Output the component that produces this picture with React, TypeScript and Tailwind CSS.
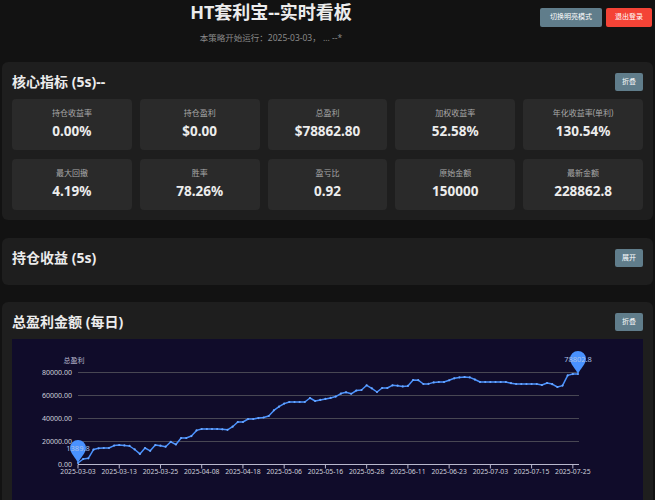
import React from "react";

const keyPts: [number, number][] = [
  [78, 462], [83, 458], [88, 458], [92, 449], [100, 447], [110, 447], [115, 444], [120, 444],
  [130, 445], [133, 447], [140, 453], [145, 447], [150, 450], [155, 444], [163, 445], [167, 446],
  [170, 440], [175, 445], [180, 437], [190, 437], [195, 430], [200, 428], [220, 428], [227, 429],
  [232, 427], [235, 421], [243, 421], [247, 418], [257, 418], [260, 416], [267, 417], [273, 410],
  [280, 405], [287, 401], [297, 401], [305, 401], [310, 397], [315, 400], [320, 399], [325, 398],
  [335, 396], [340, 393], [345, 391], [352, 393], [357, 389], [362, 389], [367, 384], [377, 391],
  [382, 387], [388, 387], [393, 384], [407, 386], [413, 379], [417, 378], [422, 383], [428, 383],
  [435, 381], [445, 381], [455, 377], [462, 376], [468, 376], [473, 377], [478, 381], [485, 381],
  [508, 381], [513, 383], [525, 383], [538, 383], [542, 384], [547, 382], [552, 383], [557, 386],
  [562, 386], [565, 378], [568, 374], [573, 373], [578, 373],
];

function interp(x: number): number {
  for (let i = 0; i < keyPts.length - 1; i++) {
    const [x0, y0] = keyPts[i];
    const [x1, y1] = keyPts[i + 1];
    if (x >= x0 && x <= x1) {
      return y0 + ((y1 - y0) * (x - x0)) / (x1 - x0);
    }
  }
  return keyPts[keyPts.length - 1][1];
}

const N = 98;
const samples: [number, number][] = Array.from({ length: N }, (_, i) => {
  const x = 78 + (i * 500) / (N - 1);
  return [x, interp(x)];
});

const dates = [
  "2025-03-03", "2025-03-13", "2025-03-25", "2025-04-08", "2025-04-18", "2025-05-06",
  "2025-05-16", "2025-05-28", "2025-06-11", "2025-06-23", "2025-07-03", "2025-07-15", "2025-07-25",
];

const yTicks = [
  { y: 371.5, t: "80000.00" },
  { y: 394.5, t: "60000.00" },
  { y: 417.5, t: "40000.00" },
  { y: 440.5, t: "20000.00" },
  { y: 463.5, t: "0.00" },
];

function Pin({ cx, cy, label }: { cx: number; cy: number; label: string }) {
  const r = 8;
  const tip = cy + 15;
  const d = `M ${cx} ${tip} C ${cx - 2} ${tip - 5}, ${cx - r} ${cy + 5}, ${cx - r} ${cy} A ${r} ${r} 0 1 1 ${cx + r} ${cy} C ${cx + r} ${cy + 5}, ${cx + 2} ${tip - 5}, ${cx} ${tip} Z`;
  return (
    <g>
      <path d={d} fill="#4992ff" />
      <text
        x={cx}
        y={cy + 2.5}
        textAnchor="middle"
        fontSize="7.5"
        fill="#a9c0e8"
        fontFamily="'Noto Sans', 'Noto Sans CJK SC', sans-serif"
      >
        {label}
      </text>
    </g>
  );
}

function Chart() {
  const linePath = samples.map(([x, y], i) => `${i === 0 ? "M" : "L"}${x.toFixed(1)} ${y.toFixed(1)}`).join(" ");
  return (
    <div className="h-[170px] bg-[#100c2a]">
      <svg width="630" height="170" viewBox="12 338 630 170">
        <text x="74" y="362" textAnchor="middle" fontSize="7" fill="#b9b8ce" fontFamily="'Noto Sans CJK SC', sans-serif">
          总盈利
        </text>
        {yTicks.map((t) =>
          t.t !== "0.00" ? <line key={t.t} x1="78" x2="579" y1={t.y} y2={t.y} stroke="#484753" strokeWidth="1" /> : null
        )}
        {yTicks.map((t) => (
          <text key={"l" + t.t} x="72" y={t.y + 2.5} textAnchor="end" fontSize="7" fill="#cfcfdc" fontFamily="'Noto Sans', sans-serif">
            {t.t}
          </text>
        ))}
        <line x1="78" x2="579" y1="463.5" y2="463.5" stroke="#b9b8ce" strokeWidth="1" />
        {dates.map((d, i) => {
          const x = 78 + (i * 500 * 8) / (N - 1);
          return (
            <g key={d}>
              <line x1={x} x2={x} y1="463.5" y2="467.5" stroke="#b9b8ce" strokeWidth="1" />
              <text x={x} y="472.5" textAnchor="middle" fontSize="6.8" fill="#cfcfdc" fontFamily="'Noto Sans', sans-serif">
                {d}
              </text>
            </g>
          );
        })}
        <path d={linePath} fill="none" stroke="#4992ff" strokeWidth="1.5" strokeLinejoin="round" />
        {samples.map(([x, y], i) => (
          <circle key={i} cx={x} cy={y} r="1.1" fill="#6aa6ff" />
        ))}
        <Pin cx={78} cy={447} label="1389.8" />
        <Pin cx={578} cy={358} label="78802.8" />
      </svg>
    </div>
  );
}

const metrics = [
  { label: "持仓收益率", value: "0.00%" },
  { label: "持仓盈利", value: "$0.00" },
  { label: "总盈利", value: "$78862.80" },
  { label: "加权收益率", value: "52.58%" },
  { label: "年化收益率(单利)", value: "130.54%" },
  { label: "最大回撤", value: "4.19%" },
  { label: "胜率", value: "78.26%" },
  { label: "盈亏比", value: "0.92" },
  { label: "原始金额", value: "150000" },
  { label: "最新金额", value: "228862.8" },
];

function SmallBtn({ children }: { children: React.ReactNode }) {
  return (
    <button className="h-[18px] px-[7px] rounded-[2px] bg-[#607d8b] text-[7px] leading-[18px] text-white">
      {children}
    </button>
  );
}

function SectionHeader({ title, btn }: { title: string; btn: string }) {
  return (
    <div className="flex h-[20px] items-center justify-between">
      <h2 className="text-[14px] font-bold leading-[20px] text-[#ececec]">{title}</h2>
      <SmallBtn>{btn}</SmallBtn>
    </div>
  );
}

export default function App() {
  return (
    <div
      className="h-[500px] overflow-hidden bg-[#121212] px-[2px] text-white"
      style={{ fontFamily: "'Noto Sans', 'Noto Sans CJK SC', sans-serif" }}
    >
      <header className="flex items-start">
        <div className="flex-1 pt-px text-center">
          <h1 className="text-[18px] font-bold leading-[22px] text-[#ececec]">HT套利宝--实时看板</h1>
          <p className="mt-[9px] text-[8.5px] leading-[12px] text-[#8a8a8a]">本策略开始运行：2025-03-03， ... --*</p>
        </div>
        <div className="flex gap-[4px] pt-[8px] pr-px">
          <button className="h-[19px] w-[62px] rounded-[2px] bg-[#607d8b] text-[7px] text-white">切换明亮模式</button>
          <button className="h-[19px] w-[46px] rounded-[2px] bg-[#f44336] text-[7px] text-white">退出登录</button>
        </div>
      </header>

      <section className="mt-[18px] rounded-[6px] bg-[#1e1e1e] p-[10px]">
        <SectionHeader title="核心指标 (5s)--" btn="折叠" />
        <div className="mt-[7px] grid grid-cols-5 gap-x-[8px] gap-y-[9px]">
          {metrics.map((m) => (
            <div key={m.label} className="h-[51px] rounded-[4px] bg-[#2a2a2a] pt-[9px] text-center">
              <div className="text-[8px] leading-[10px] text-[#a8a8a8]">{m.label}</div>
              <div className="mt-[4px] text-[13.5px] font-bold leading-[18px] text-[#ececec]">{m.value}</div>
            </div>
          ))}
        </div>
      </section>

      <section className="mt-[18px] rounded-[6px] bg-[#1e1e1e] px-[10px] pt-[10px] pb-[17px]">
        <SectionHeader title="持仓收益 (5s)" btn="展开" />
      </section>

      <section className="mt-[17px] rounded-[6px] bg-[#1e1e1e] p-[10px]">
        <SectionHeader title="总盈利金额 (每日)" btn="折叠" />
        <div className="mt-[7px]">
          <Chart />
        </div>
      </section>
    </div>
  );
}
